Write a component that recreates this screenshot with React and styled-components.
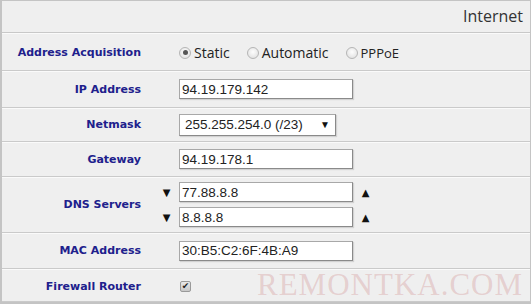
import React from 'react'
import styled, { createGlobalStyle } from 'styled-components'

const GlobalStyle = createGlobalStyle`
    html, body {
        margin: 0;
        padding: 0;
        background: #efefef;
    }
`

const App = () => {
    return (
        <Frame>
            <GlobalStyle />
            <Header>Internet</Header>

            <Row h={38} top={2}>
                <Label>Address Acquisition</Label>
                <Value>
                    <Radios>
                        <RadioItem><Radio checked /> Static</RadioItem>
                        <RadioItem><Radio /> Automatic</RadioItem>
                        <RadioItem small><Radio /> PPPoE</RadioItem>
                    </Radios>
                </Value>
            </Row>

            <Row h={37}>
                <Label>IP Address</Label>
                <Value><Input defaultValue="94.19.179.142" /></Value>
            </Row>

            <Row h={34}>
                <Label>Netmask</Label>
                <Value>
                    <Select>
                        <span>255.255.254.0 (/23)</span>
                        <Arrow>▼</Arrow>
                    </Select>
                </Value>
            </Row>

            <Row h={35}>
                <Label>Gateway</Label>
                <Value><Input defaultValue="94.19.178.1" /></Value>
            </Row>

            <Row h={56}>
                <Label>DNS Servers</Label>
                <Value>
                    <DnsList>
                        <DnsLine>
                            <Arrow>▼</Arrow>
                            <Input defaultValue="77.88.8.8" />
                            <Arrow>▲</Arrow>
                        </DnsLine>
                        <DnsLine>
                            <Arrow>▼</Arrow>
                            <Input defaultValue="8.8.8.8" />
                            <Arrow>▲</Arrow>
                        </DnsLine>
                    </DnsList>
                </Value>
            </Row>

            <Row h={36}>
                <Label>MAC Address</Label>
                <Value><Input defaultValue="30:B5:C2:6F:4B:A9" /></Value>
            </Row>

            <Row h={33} top={2}>
                <Label>Firewall Router</Label>
                <Value><Check>✔</Check></Value>
            </Row>

            <Watermark>REMONTKA.COM</Watermark>
        </Frame>
    )
}

export default App

const Frame = styled.div`
    position: relative;
    width: 531px;
    height: 304px;
    box-sizing: border-box;
    border: 1px solid #c4c4c4;
    border-left: 2px solid #c4c4c4;
    border-bottom: 2px solid #c4c4c4;
    background: #efefef;
    overflow: hidden;
    font-family: "DejaVu Sans", Verdana, sans-serif;
`

const Header = styled.div`
    height: 32px;
    box-sizing: border-box;
    display: flex;
    align-items: flex-end;
    justify-content: flex-end;
    padding: 0 7px 5px 0;
    font-family: "Open Sans", sans-serif;
    font-size: 16px;
    color: #333;
    border-bottom: 1px solid #c8c8c8;
    box-shadow: 0 1px 0 #fafafa;
`

const Row = styled.div`
    display: grid;
    grid-template-columns: 148px 1fr;
    align-items: center;
    height: ${p => p.h}px;
    padding-top: ${p => p.top || 0}px;
    box-sizing: border-box;
    border-bottom: 1px solid #cacaca;
    box-shadow: 0 1px 0 #fafafa;
`

const Label = styled.div`
    text-align: right;
    padding-right: 9px;
    font-size: 11px;
    font-weight: bold;
    color: #20208c;
`

const Value = styled.div`
    padding-left: 29px;
    display: flex;
    align-items: center;
`

const Radios = styled.div`
    display: flex;
    align-items: center;
    gap: 17px;
`

const RadioItem = styled.label`
    display: flex;
    align-items: center;
    gap: 3px;
    font-family: "Open Sans", sans-serif;
    font-size: ${p => (p.small ? '13px' : '14px')};
    color: #222;
`

const Radio = styled.span`
    width: 10px;
    height: 10px;
    border-radius: 50%;
    border: 1px solid #b5b5b5;
    background: radial-gradient(circle at 50% 40%, #fdfdfd, #dcdcdc);
    position: relative;
    display: inline-block;

    &::after {
        content: '';
        display: ${p => (p.checked ? 'block' : 'none')};
        position: absolute;
        left: 2.5px;
        top: 2.5px;
        width: 5px;
        height: 5px;
        border-radius: 50%;
        background: #555;
    }
`

const Input = styled.input`
    width: 174px;
    height: 20px;
    box-sizing: border-box;
    border: 1px solid #a8a8a8;
    border-right-color: #8a8a8a;
    border-bottom-color: #8a8a8a;
    box-shadow: 1px 1px 1px rgba(0, 0, 0, 0.12);
    background: #fff;
    padding: 0 2px;
    font-family: "Liberation Sans", Arial, sans-serif;
    font-size: 13.5px;
    color: #222;
    outline: none;
`

const Select = styled.div`
    width: 157px;
    height: 22px;
    box-sizing: border-box;
    border: 1px solid #a8a8a8;
    border-right-color: #8a8a8a;
    border-bottom-color: #8a8a8a;
    box-shadow: 1px 1px 1px rgba(0, 0, 0, 0.12);
    background: #fff;
    display: flex;
    align-items: center;
    justify-content: space-between;
    padding: 0 6px 0 5px;
    font-family: "Liberation Sans", Arial, sans-serif;
    font-size: 13.5px;
    color: #222;
`

const Arrow = styled.span`
    font-size: 10px;
    color: #111;
    width: 9px;
    display: inline-block;
    text-align: center;
`

const DnsList = styled.div`
    display: flex;
    flex-direction: column;
    gap: 5px;
    margin-left: -17px;
`

const DnsLine = styled.div`
    display: flex;
    align-items: center;
    gap: 8px;
`

const Check = styled.span`
    width: 11px;
    height: 11px;
    box-sizing: border-box;
    border: 1px solid #9a9a9a;
    border-radius: 2px;
    background: linear-gradient(#e8e8e8, #c8c8c8);
    font-size: 9px;
    line-height: 9px;
    text-align: center;
    color: #222;
    margin-left: 1px;
`

const Watermark = styled.div`
    position: absolute;
    left: 255px;
    top: 266px;
    font-family: "Liberation Serif", "Times New Roman", serif;
    font-size: 31px;
    letter-spacing: 1px;
    color: rgba(205, 130, 130, 0.3);
    pointer-events: none;
`
